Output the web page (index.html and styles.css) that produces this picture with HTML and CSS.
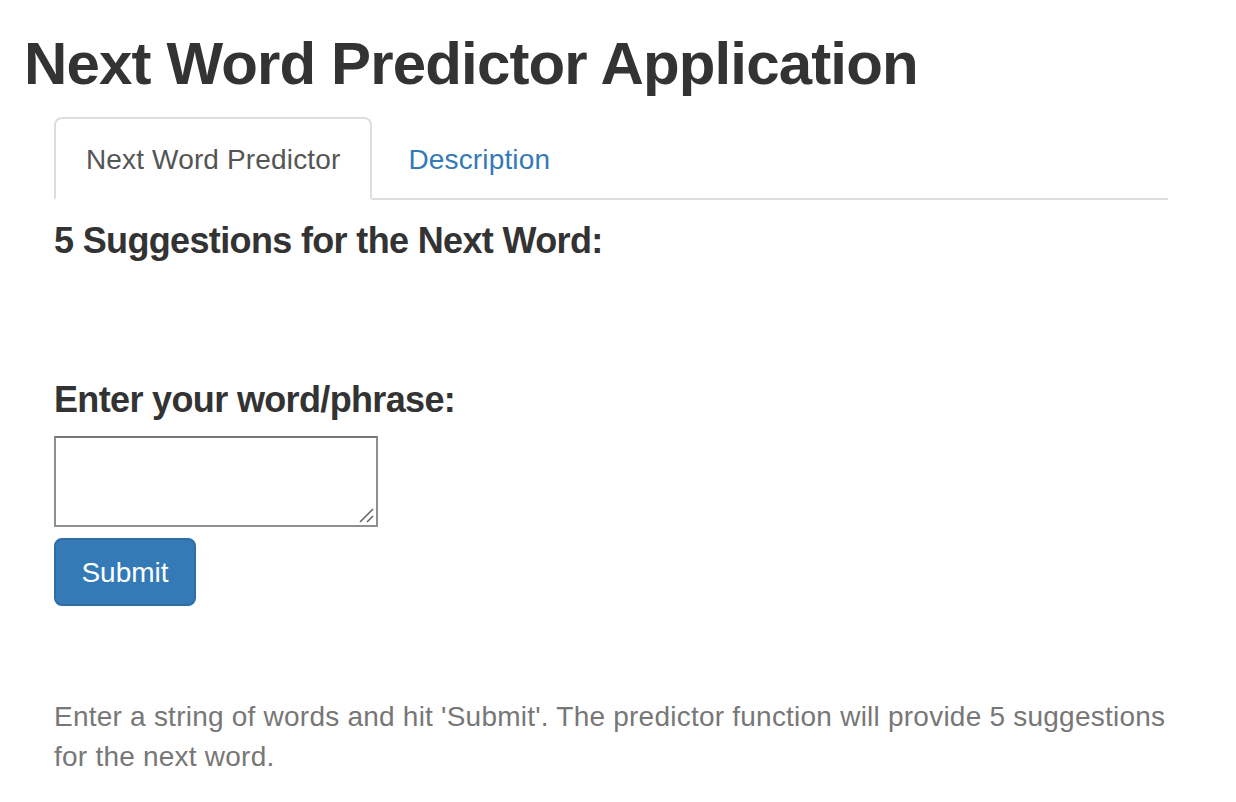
FILE: index.html
```html
<!DOCTYPE html>
<html lang="en">
<head>
<meta charset="utf-8">
<title>Next Word Predictor Application</title>
<link rel="stylesheet" href="styles.css">
</head>
<body>
<h1 class="title">Next Word Predictor Application</h1>
<main class="panel">
  <ul class="tabs">
    <li class="tab active"><a href="#">Next Word Predictor</a></li>
    <li class="tab"><a href="#">Description</a></li>
  </ul>
  <section class="tab-content">
    <h4 class="heading suggestions">5 Suggestions for the Next Word:</h4>
    <h4 class="heading input-label">Enter your word/phrase:</h4>
    <div class="phrase-wrap">
      <textarea class="phrase"></textarea>
      <svg class="grip" width="16" height="16" viewBox="0 0 16 16" aria-hidden="true">
        <path d="M2 15 L15 2" stroke="#666" stroke-width="1.6" fill="none"/>
        <path d="M9 15 L15 9" stroke="#666" stroke-width="1.6" fill="none"/>
      </svg>
    </div>
    <button class="btn-submit" type="button">Submit</button>
    <p class="help">Enter a string of words and hit 'Submit'. The predictor function will provide 5 suggestions for the next word.</p>
  </section>
</main>
</body>
</html>
```

FILE: styles.css
```css
html, body {
  margin: 0;
  padding: 0;
  background: #fff;
}

body {
  font-family: "Liberation Sans", Arial, Helvetica, sans-serif;
  color: #333;
  font-size: 28px;
  line-height: 40px;
}

.title {
  margin: 31px 0 0 0;
  padding-left: 24px;
  font-size: 60px;
  line-height: 66px;
  font-weight: bold;
  letter-spacing: -0.85px;
  color: #333;
}

.panel {
  margin: 20px 0 0 54px;
  width: 1114px;
}

.tabs {
  display: flex;
  list-style: none;
  margin: 0;
  padding: 0;
  border-bottom: 2px solid #ddd;
}

.tab {
  margin-bottom: -2px;
}

.tab a {
  display: block;
  padding: 21px 30px 18px 30px;
  margin-right: 4px;
  line-height: 40px;
  font-size: 28px;
  letter-spacing: 0.15px;
  color: #337ab7;
  text-decoration: none;
  border: 2px solid transparent;
  border-radius: 8px 8px 0 0;
}

.tab.active a {
  color: #555;
  background: #fff;
  border-color: #ddd;
  border-bottom-color: #fff;
}

.tab-content {
  display: flex;
  flex-direction: column;
  align-items: flex-start;
}

.heading {
  margin: 0;
  font-size: 36px;
  line-height: 40px;
  font-weight: bold;
  letter-spacing: -0.65px;
  color: #333;
}

.suggestions {
  margin-top: 21px;
}

.input-label {
  margin-top: 119px;
}

.phrase-wrap {
  position: relative;
  margin-top: 16px;
  width: 324px;
  height: 91px;
}

.phrase {
  display: block;
  box-sizing: border-box;
  margin: 0;
  width: 324px;
  height: 91px;
  padding: 4px;
  border: 2px solid #8f8f8f;
  border-top-color: #767676;
  border-radius: 0;
  font-family: inherit;
  font-size: 26px;
  background: #fff;
  resize: none;
}

.grip {
  position: absolute;
  right: 4px;
  bottom: 4px;
  pointer-events: none;
}

.btn-submit {
  display: block;
  box-sizing: border-box;
  margin-top: 11px;
  width: 142px;
  height: 68px;
  padding: 2px 0 0 0;
  font-family: inherit;
  font-size: 28px;
  line-height: 40px;
  color: #fff;
  background: #337ab7;
  border: 2px solid #2e6da4;
  border-radius: 8px;
}

.help {
  margin: 91px 0 0 0;
  font-size: 28px;
  line-height: 40px;
  letter-spacing: 0.23px;
  color: #777;
}
```
